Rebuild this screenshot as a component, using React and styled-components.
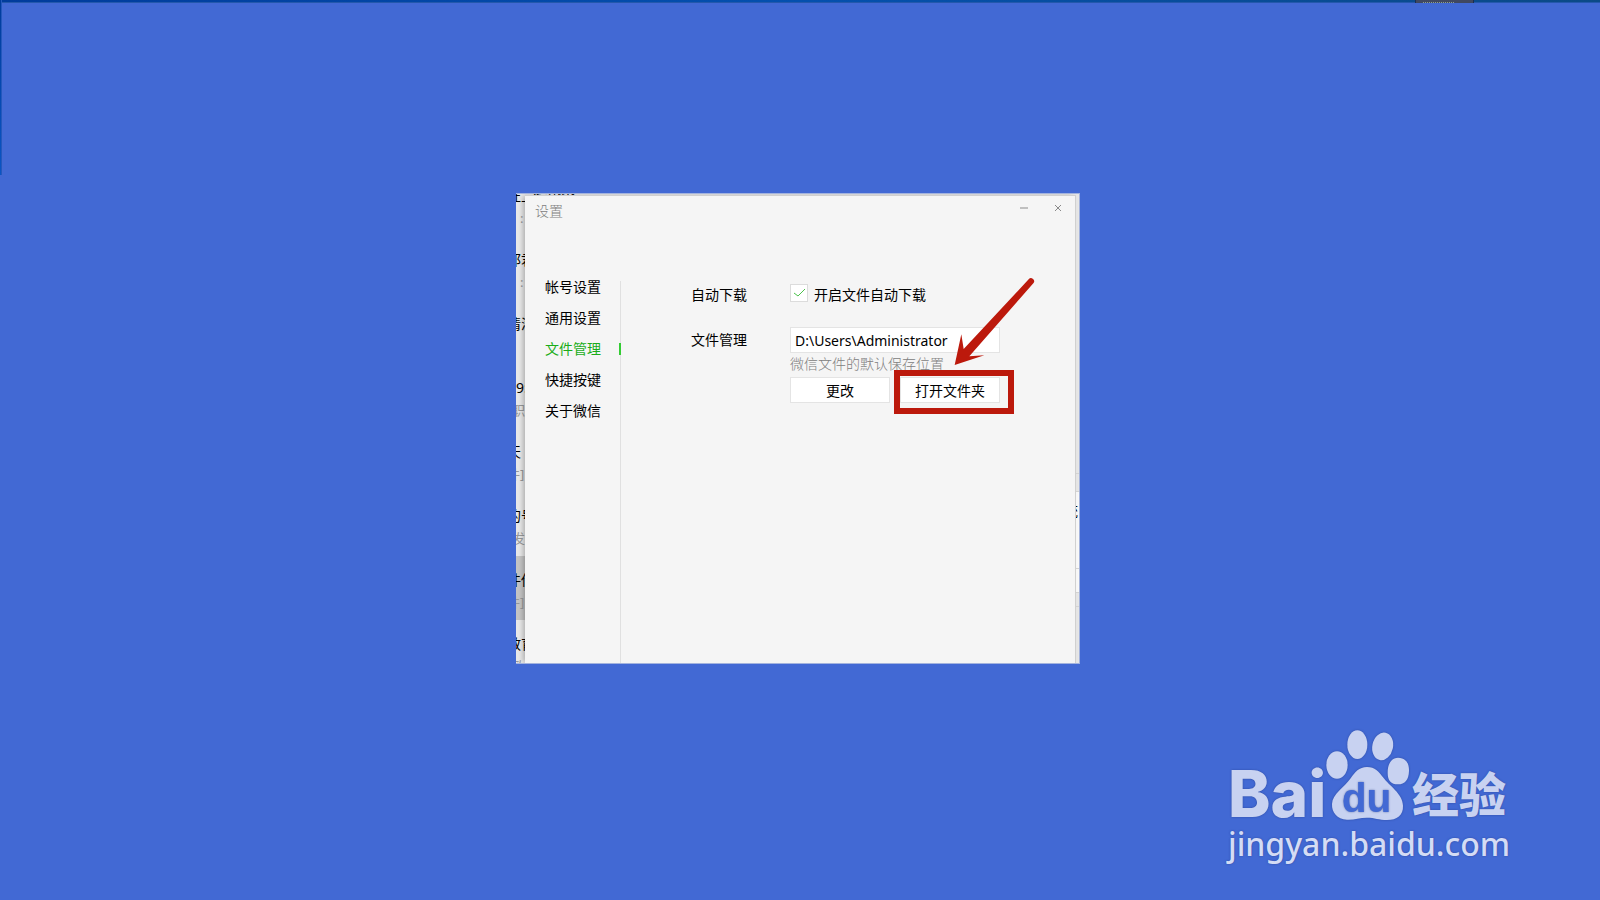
import React, { useState } from 'react';
import styled, { createGlobalStyle } from 'styled-components';

const chats = [
    { name: '旺上', preview: ':', indent: 4 },
    { name: '邵君', preview: ':', indent: 4 },
    { name: '情满', preview: '', indent: 0 },
    { name: '9:', preview: '职', indent: -4, latin: true },
    { name: '天', preview: '件]', indent: -9 },
    { name: '的号', preview: '发', indent: -4 },
    { name: '件传', preview: '件]', indent: -9, active: true },
    { name: '教育', preview: '欧', indent: -4 },
];

const sections = ['帐号设置', '通用设置', '文件管理', '快捷按键', '关于微信'];

const Paw = () => (
    <PawIcon viewBox="347 58 252 273" aria-hidden="true">
        <ellipse cx="380" cy="163" rx="32" ry="41" />
        <ellipse cx="441" cy="102" rx="30" ry="43" />
        <ellipse cx="517" cy="107" rx="31" ry="42" transform="rotate(12 517 107)" />
        <path d="M563 141 C584 141 597 155 596 181 C595 208 584 221 563 221 C542 221 532 210 532 187 C532 158 544 141 563 141 Z" />
        <path d="M470 169 C494 169 505 182 518 200 C537 226 577 249 578 285 C579 314 560 328 530 328 C506 328 493 321 470 321 C447 321 432 328 410 327 C380 325 364 306 365 280 C366 250 402 230 421 203 C434 184 446 169 470 169 Z" />
        <text x="394" y="304">du</text>
    </PawIcon>
);

const App = () => {
    const [section, setSection] = useState('文件管理');
    const [autoDownload, setAutoDownload] = useState(true);
    const [path, setPath] = useState('D:\\Users\\Administrator');

    return (
        <>
            <GlobalStyle />
            <Desktop>
                <TopEdge><Tab /></TopEdge>
                <LeftEdge />
                <Capture>
                    <ChatList>
                        {chats.map((chat, i) => (
                            <Chat key={i} $active={chat.active}>
                                <ChatName $latin={chat.latin}>{chat.name}</ChatName>
                                <Preview $indent={chat.indent}>{chat.preview}</Preview>
                            </Chat>
                        ))}
                    </ChatList>
                    <ListHeader>
                        <span>通讯录</span>
                        <ListDate>8/20</ListDate>
                    </ListHeader>
                    <Conversation>
                        <Pane $height={280} />
                        <Pane $height={18} />
                        <Pane $height={77} $light>统</Pane>
                        <Pane $height={24} $light />
                        <Pane $height={14} />
                        <Pane $height={58} />
                    </Conversation>
                    <Window>
                        <TitleBar>
                            <Title>设置</Title>
                            <WindowButton aria-label="最小化">
                                <svg width="10" height="10" viewBox="0 0 10 10">
                                    <path d="M1 5 H9" stroke="#c0c0c0" strokeWidth="2" />
                                </svg>
                            </WindowButton>
                            <WindowButton aria-label="关闭">
                                <svg width="10" height="10" viewBox="0 0 10 10">
                                    <path d="M2 2 L8 8 M8 2 L2 8" stroke="#8a8a8a" strokeWidth="1" />
                                </svg>
                            </WindowButton>
                        </TitleBar>
                        <Content>
                            <Nav>
                                {sections.map((name) => (
                                    <NavItem
                                        key={name}
                                        $active={name === section}
                                        onClick={() => setSection(name)}
                                    >
                                        {name}
                                    </NavItem>
                                ))}
                            </Nav>
                            <Form onSubmit={(e) => e.preventDefault()}>
                                <Field>
                                    <Label as="span">自动下载</Label>
                                    <CheckLabel>
                                        <Checkbox
                                            type="checkbox"
                                            checked={autoDownload}
                                            onChange={(e) => setAutoDownload(e.target.checked)}
                                        />
                                        <Tick viewBox="0 0 18 18" aria-hidden="true">
                                            {autoDownload && <path d="M4 9 L8 12 L15 5" />}
                                        </Tick>
                                        开启文件自动下载
                                    </CheckLabel>
                                </Field>
                                <Field>
                                    <Label htmlFor="path">文件管理</Label>
                                    <Storage>
                                        <PathInput id="path" value={path} onChange={(e) => setPath(e.target.value)} />
                                        <Hint>微信文件的默认保存位置</Hint>
                                        <Actions>
                                            <Button>更改</Button>
                                            <Marked>
                                                <Button>打开文件夹</Button>
                                                <Frame />
                                                <Arrow viewBox="510 270 270 285" aria-hidden="true">
                                                    <path d="M524 537 L544 445 L551 489 L746 280 A9 9 0 0 1 760 292 L568 511 L613 508 Z" />
                                                </Arrow>
                                            </Marked>
                                        </Actions>
                                    </Storage>
                                </Field>
                            </Form>
                        </Content>
                    </Window>
                </Capture>
                <Brand>
                    <Logo>
                        <Bai>Bai</Bai>
                        <Paw />
                        <Jingyan>经验</Jingyan>
                    </Logo>
                    <Site href="#">jingyan.baidu.com</Site>
                </Brand>
            </Desktop>
        </>
    );
};

const GlobalStyle = createGlobalStyle`
  * {
      box-sizing: border-box;
  }
  body {
      margin: 0;
      font-family: "Noto Sans", "Noto Sans CJK SC", sans-serif;
      font-size: 14px;
      line-height: 20px;
      color: #000;
  }
  button, input {
      font: inherit;
      color: inherit;
  }
`;

const Desktop = styled.main`
  position: relative;
  display: grid;
  place-items: center;
  min-height: 100vh;
  padding: 0 4px 43px 0;
  overflow: hidden;
  background: #4269d4;
`;

const TopEdge = styled.div`
  position: absolute;
  top: 0;
  left: 0;
  right: 0;
  display: flex;
  justify-content: flex-end;
  height: 3px;
  padding-right: 126px;
  background: linear-gradient(to right, #003c9c, #0450ae 50%, #0b4a86);
  border-bottom: 1px solid #2458ac;
`;

const Tab = styled.div`
  width: 59px;
  height: 3px;
  padding: 2px 18px 0 7px;
  background: #404860;
  border: solid #1c2f50;
  border-width: 0 1px;

  &::after {
      content: "";
      display: block;
      height: 1px;
      background: repeating-linear-gradient(to right, #8fa08a 0 1px, transparent 1px 2px);
  }
`;

const LeftEdge = styled.div`
  position: absolute;
  top: 0;
  left: 0;
  width: 2px;
  height: 175px;
  background: linear-gradient(#003c9c, #0a55c4);
  border-right: 1px solid #2458bc;
`;

const Capture = styled.div`
  position: relative;
  width: 564px;
  height: 471px;
  overflow: hidden;
  background: #e6e6e6;
  border: 1px solid #a3b3de;
  border-width: 1px 1px 1px 0;
`;

const ChatList = styled.div`
  position: absolute;
  top: -22px;
  left: 0;
  width: 9px;
`;

const Chat = styled.div`
  height: 64px;
  padding-top: 14px;
  overflow: hidden;
  white-space: nowrap;
  background: ${({ $active }) => ($active ? '#c4c4c4' : '#e8e8e8')};
`;

const ChatName = styled.div`
  height: 22px;
  margin-left: ${({ $latin }) => ($latin ? '0' : '-9px')};
`;

const Preview = styled.div`
  margin-left: ${({ $indent }) => $indent}px;
  font-size: 13px;
  color: #999;
`;

const ListHeader = styled.div`
  position: absolute;
  top: -15px;
  left: 17px;
  display: flex;
  gap: 70px;
`;

const ListDate = styled.span`
  font-size: 12px;
  color: #aaa;
`;

const Conversation = styled.div`
  position: absolute;
  top: 0;
  right: 0;
  width: 4px;
`;

const Pane = styled.div`
  display: flex;
  justify-content: flex-end;
  height: ${({ $height }) => $height}px;
  padding: 9px 1px 0 0;
  background: ${({ $light }) => ($light ? '#f8f8f8' : '#e6e6e6')};
  border-bottom: 1px solid #d4d4d4;
`;

const Window = styled.section`
  position: relative;
  height: 468px;
  margin: 1px 3px 0 9px;
  background: #f5f5f5;
  border: 1px solid #d0d0d0;
  border-width: 1px 1px 0 0;
  box-shadow: -3px 0 5px -1px rgba(0, 0, 0, 0.25);
`;

const TitleBar = styled.header`
  display: flex;
  align-items: center;
  gap: 14px;
  height: 24px;
  padding: 0 7px 0 10px;
`;

const Title = styled.h1`
  flex: 1;
  margin: 0;
  padding-top: 6px;
  font-size: 14px;
  font-weight: 300;
  color: #808080;
`;

const WindowButton = styled.button`
  display: grid;
  place-items: center;
  width: 20px;
  height: 20px;
  padding: 0;
  background: none;
  border: 0;
`;

const Content = styled.div`
  display: flex;
  height: 443px;
  padding-top: 61px;
`;

const Nav = styled.nav`
  display: flex;
  flex-direction: column;
  gap: 19px;
  width: 96px;
  background: linear-gradient(#e0e0e0, #e0e0e0) right / 1px 100% no-repeat;
`;

const NavItem = styled.button`
  height: 12px;
  padding: 0 0 0 20px;
  line-height: 12px;
  text-align: left;
  color: ${({ $active }) => ($active ? '#1aad19' : '#000')};
  background: none;
  border: 0;
  border-right: 2px solid ${({ $active }) => ($active ? '#33cc33' : 'transparent')};
`;

const Form = styled.form`
  flex: 1;
  display: flex;
  flex-direction: column;
  gap: 22px;
  padding: 1px 0 0 70px;
`;

const Field = styled.div`
  display: flex;
  align-items: flex-start;
`;

const Label = styled.label`
  width: 99px;
  padding-top: 3px;
`;

const CheckLabel = styled.label`
  position: relative;
  display: flex;
  gap: 6px;
  height: 22px;
  line-height: 22px;
  padding-top: 2px;
`;

const Checkbox = styled.input`
  appearance: none;
  width: 18px;
  height: 18px;
  margin: 0;
  background: #fff;
  border: 1px solid #dcdcdc;
`;

const Tick = styled.svg`
  position: absolute;
  top: 2px;
  left: 0;
  width: 18px;
  height: 18px;
  fill: none;
  stroke: #4cc24c;
  pointer-events: none;
`;

const Storage = styled.div`
  display: flex;
  flex-direction: column;
  width: 210px;
`;

const PathInput = styled.input`
  height: 26px;
  padding: 0 4px;
  background: #fff;
  border: 1px solid #e4e4e4;
`;

const Hint = styled.p`
  height: 24px;
  margin: 0;
  line-height: 22px;
  font-weight: 300;
  color: #808080;
`;

const Actions = styled.div`
  display: flex;
  justify-content: space-between;
`;

const Button = styled.button`
  width: 100px;
  height: 26px;
  padding: 1px 0 0;
  background: #fff;
  border: 1px solid #e4e4e4;
`;

const Marked = styled.div`
  position: relative;
  height: 26px;
`;

const Frame = styled.div`
  position: absolute;
  inset: -7px -14px -11px -6px;
  border: 6px solid #bc190c;
  pointer-events: none;
`;

const Arrow = styled.svg`
  position: absolute;
  left: 50px;
  top: -101px;
  width: 90px;
  height: 95px;
  fill: #bc190c;
  pointer-events: none;
`;

const Brand = styled.footer`
  position: absolute;
  right: 88px;
  bottom: 36px;
  width: 284px;
  color: #c8d2f1;
`;

const Logo = styled.div`
  display: flex;
  align-items: flex-end;
  height: 94px;
  text-shadow: 0 0 2px rgba(30, 50, 120, 0.6);
`;

const Bai = styled.span`
  width: 98px;
  font: 800 64px/60px Inter, "Liberation Sans", sans-serif;
`;

const PawIcon = styled.svg`
  width: 84px;
  height: 91px;
  margin-bottom: 3px;
  fill: #c8d2f1;
  filter: drop-shadow(0 0 1px rgba(30, 50, 120, 0.5));

  text {
      font: bold 122px "Liberation Sans", Arial, sans-serif;
      fill: #4269d4;
  }
`;

const Jingyan = styled.span`
  padding-left: 2px;
  font: 900 47px/64px "Noto Sans CJK SC", sans-serif;
`;

const Site = styled.a`
  display: block;
  font-size: 32px;
  font-weight: 500;
  line-height: 40px;
  color: #d4dcf5;
  text-decoration: none;
  text-shadow: 0 0 2px rgba(30, 50, 120, 0.6);
`;

export default App;
